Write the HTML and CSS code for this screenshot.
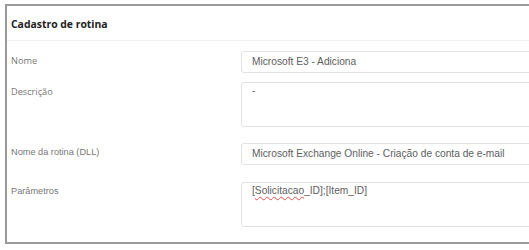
FILE: index.html
```html
<!DOCTYPE html>
<html lang="pt-BR">
<head>
    <meta charset="UTF-8">
    <meta name="viewport" content="width=device-width, initial-scale=1.0">
    <title>Cadastro de rotina</title>
    <link rel="stylesheet" href="styles.css">
</head>
<body>
    <div class="page">
        <div class="panel">
            <div class="panel-header">Cadastro de rotina</div>
            <div class="panel-body">
                <div class="form-row">
                    <label class="field-label soft">Nome</label>
                    <div class="field">Microsoft E3 - Adiciona</div>
                </div>
                <div class="form-row tall">
                    <label class="field-label soft">Descrição</label>
                    <div class="field area">-</div>
                </div>
                <div class="form-row">
                    <label class="field-label">Nome da rotina (DLL)</label>
                    <div class="field">Microsoft Exchange Online - Criação de conta de e-mail</div>
                </div>
                <div class="form-row last">
                    <label class="field-label">Parâmetros</label>
                    <div class="field area">[<span class="typo">Solicitacao</span>_ID];[Item_ID]</div>
                </div>
            </div>
        </div>
    </div>
</body>
</html>
```

FILE: styles.css
```css
* {
    margin: 0;
    padding: 0;
    box-sizing: border-box;
}

body {
    background: #fff;
    overflow: hidden;
    font-family: 'Liberation Sans', Arial, sans-serif;
}

/* the form is wider than the window, so clip it */
.page {
    width: 100%;
    overflow: hidden;
    padding: 4px 0 0 5px;
}

.panel {
    width: 640px;
    border: 2px solid #9a9a9a;
    border-right: none;
    background: #fff;
}

.panel-header {
    height: 35px;
    padding: 10px 4px 0;
    border-bottom: 1px solid #f1f1f1;
    font-family: 'Open Sans', sans-serif;
    font-weight: bold;
    font-size: 10.4px;
    line-height: 16px;
    color: #222;
}

.panel-body {
    padding: 10px 0 15px 4px;
}

.form-row {
    display: grid;
    grid-template-columns: 230px 1fr;
    margin-bottom: 9px;
}

.form-row.tall {
    margin-bottom: 16px;
}

.form-row.last {
    margin-bottom: 0;
}

.form-row:nth-child(3) {
    margin-bottom: 17px;
}

.field-label {
    padding-top: 3px;
    font-size: 9.2px;
    line-height: 13px;
    color: #777;
}

.field-label.soft {
    font-family: 'Open Sans', sans-serif;
    font-size: 9.2px;
}

.field {
    height: 22px;
    padding: 0 10px;
    border: 1px solid #e2e2e2;
    border-radius: 3px;
    font-size: 10.2px;
    line-height: 20px;
    color: #606060;
    white-space: nowrap;
}

.field.area {
    height: 45px;
    line-height: 13px;
    padding-top: 1px;
}

.typo {
    text-decoration: underline wavy #e05050;
    text-decoration-thickness: 1px;
    text-underline-offset: 2px;
}
```
